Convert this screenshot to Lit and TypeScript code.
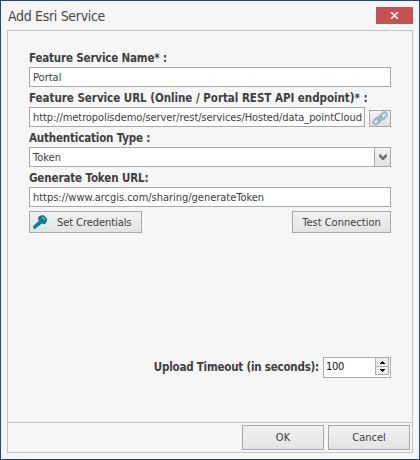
import { LitElement, html, css } from "lit";
import { customElement } from "lit/decorators.js";

@customElement("app-root")
export class AppRoot extends LitElement {
  static styles = css`
    :host {
      display: block;
      width: 420px;
      height: 460px;
      font: 11px/14px "DejaVu Sans Condensed", "DejaVu Sans", sans-serif;
      font-stretch: condensed;
      color: #404040;
      cursor: default;
    }
    * { box-sizing: border-box; }
    .window {
      height: 460px;
      border: 1px solid #1b468d;
      background: #f6f6f6;
      padding: 6px;
      display: flex;
      flex-direction: column;
      white-space: nowrap;
    }
    .titlebar {
      height: 23px;
      display: flex;
      justify-content: space-between;
    }
    .title {
      font-size: 14px;
      line-height: 18px;
      letter-spacing: -0.32px;
      color: #484848;
      padding-left: 1px;
    }
    .close {
      width: 37px;
      height: 17px;
      background: #c75050;
      display: grid;
      place-items: center;
    }
    svg { display: block; }
    .frame {
      width: 406px;
      height: 423px;
      border: 1px solid #c3c3c3;
      display: flex;
      flex-direction: column;
    }
    .form {
      flex: 1;
      padding: 20px 21px 0;
      display: flex;
      flex-direction: column;
    }
    .label {
      height: 20px;
      padding-top: 5px;
      font-size: 11.5px;
      line-height: 13px;
      font-weight: bold;
    }
    .label.first { height: 16px; padding-top: 1px; }
    .field {
      height: 20px;
      width: 362px;
      border: 1px solid #a8a8a8;
      background: #fff;
      padding-left: 3px;
      line-height: 19px;
      display: flex;
      justify-content: space-between;
    }
    .row { display: flex; justify-content: space-between; }
    .end { align-items: flex-end; }
    .url { width: 336px; }
    .button {
      border: 1px solid #a8a8a8;
      background: linear-gradient(#f1f1f1, #e3e3e3);
      display: flex;
      align-items: center;
      justify-content: center;
    }
    .button span { padding-top: 1px; }
    .link { width: 22px; height: 17px; }
    .drop {
      width: 16px;
      border-left: 1px solid #a8a8a8;
      background: linear-gradient(#f1f1f1, #e3e3e3);
      display: grid;
      place-items: center;
    }
    .actions { margin-top: 4px; }
    .cred { width: 113px; height: 22px; justify-content: flex-start; padding-left: 3px; }
    .cred svg { margin-right: 9px; }
    .test { width: 99px; height: 22px; }
    .timeout {
      margin-top: 124px;
      display: flex;
      justify-content: flex-end;
    }
    .caption {
      font-size: 11.5px;
      font-weight: bold;
      line-height: 20px;
      letter-spacing: -0.22px;
      margin-right: 4px;
    }
    .spin {
      width: 68px;
      height: 21px;
      border: 1px solid #a8a8ae;
      background: #fff;
      color: #111;
      padding: 0 1px 0 2px;
      display: flex;
      justify-content: space-between;
      line-height: 17px;
    }
    .arrows { width: 14px; height: 17px; }
    .arrow {
      height: 9px;
      border: 1px solid #b0b0b0;
      background: #ececec;
      display: grid;
      place-items: center;
    }
    .arrow.up { border-top: 0; }
    .arrow.down { height: 8px; border-top: 0; }
    .footer {
      height: 30px;
      border-top: 1px solid #c3c3c3;
      padding: 2px 2px 0 0;
      display: flex;
      justify-content: flex-end;
      gap: 4px;
    }
    .footer .button { width: 82px; height: 25px; }
    .name-label { letter-spacing: -0.17px; }
    .url-label { letter-spacing: -0.03px; }
    .auth-label { letter-spacing: -0.17px; }
    .token-label { letter-spacing: -0.12px; }
    .url-text { letter-spacing: -0.08px; }
    .token-text { letter-spacing: -0.02px; }
    .cred-text { letter-spacing: -0.07px; }
    .number { letter-spacing: -0.3px; }
  `;

  render() {
    return html`
      <div class="window">
        <div class="titlebar">
          <div class="title">Add Esri Service</div>
          <div class="close">
            <svg width="9" height="7" viewBox="0 0 9 7"><path d="M1 0L8 7M8 0L1 7" stroke="#fff" stroke-width="1.7"/></svg>
          </div>
        </div>
        <div class="frame">
          <div class="form">
            <div class="label first"><span class="name-label">Feature Service Name* :</span></div>
            <div class="field"><span>Portal</span></div>
            <div class="label"><span class="url-label">Feature Service URL (Online / Portal REST API endpoint)* :</span></div>
            <div class="row end">
              <div class="field url"><span class="url-text">http://metropolisdemo/server/rest/services/Hosted/data_pointCloud</span></div>
              <div class="button link">
                <svg width="16" height="15" viewBox="0 0 16 15" fill="none" stroke-linecap="round">
                  <g stroke="#7c9eae" stroke-width="1.9">
                    <rect x="7.3" y="2.6" width="8" height="4.6" rx="2.3" transform="rotate(-45 11.3 4.9)"/>
                    <rect x="0.7" y="7.8" width="8" height="4.6" rx="2.3" transform="rotate(-45 4.7 10.1)"/>
                    <path d="M6.3 9L9.7 5.8"/>
                  </g>
                  <g stroke="#b5d5e4" stroke-width="0.9">
                    <rect x="7.3" y="2.6" width="8" height="4.6" rx="2.3" transform="rotate(-45 11.3 4.9)"/>
                    <rect x="0.7" y="7.8" width="8" height="4.6" rx="2.3" transform="rotate(-45 4.7 10.1)"/>
                  </g>
                </svg>
              </div>
            </div>
            <div class="label"><span class="auth-label">Authentication Type :</span></div>
            <div class="field">
              <span>Token</span>
              <div class="drop">
                <svg width="8" height="7" viewBox="0 0 8 7"><path d="M0 0.5L1.7 0.5L4 3L6.3 0.5L8 0.5V2.5L4 6.5L0 2.5Z" fill="#6c6c6c"/></svg>
              </div>
            </div>
            <div class="label"><span class="token-label">Generate Token URL:</span></div>
            <div class="field"><span class="token-text">https://www.arcgis.com/sharing/generateToken</span></div>
            <div class="row actions">
              <div class="button cred">
                <svg width="15" height="14" viewBox="0 0 15 14">
                  <path d="M5.2 2.2L6.5 1L8.8 0.3H10.8L14 3.6V5.8L12.8 8.5L10.5 9.2L8.8 8.4L7.5 9.4L7 10.6L5.5 10.7L5 12L3.5 12.2L3 13.7H0.5L0 11.2L5.8 5.8L5 4Z" fill="#078199"/>
                  <path d="M9.4 2.2L11.8 4.6" stroke="#e8f2f3" stroke-width="1"/>
                </svg>
                <span class="cred-text">Set Credentials</span>
              </div>
              <div class="button test"><span>Test Connection</span></div>
            </div>
            <div class="timeout">
              <span class="caption">Upload Timeout (in seconds):</span>
              <div class="spin">
                <span class="number">100</span>
                <div class="arrows">
                  <div class="arrow up"><svg width="5" height="3" viewBox="0 0 5 3"><path d="M2 0H3V1H4V2H5V3H0V2H1V1H2Z"/></svg></div>
                  <div class="arrow down"><svg width="5" height="3" viewBox="0 0 5 3"><path d="M0 0H5V1H4V2H3V3H2V2H1V1H0Z"/></svg></div>
                </div>
              </div>
            </div>
          </div>
          <div class="footer">
            <div class="button"><span>OK</span></div>
            <div class="button"><span>Cancel</span></div>
          </div>
        </div>
      </div>
    `;
  }
}
